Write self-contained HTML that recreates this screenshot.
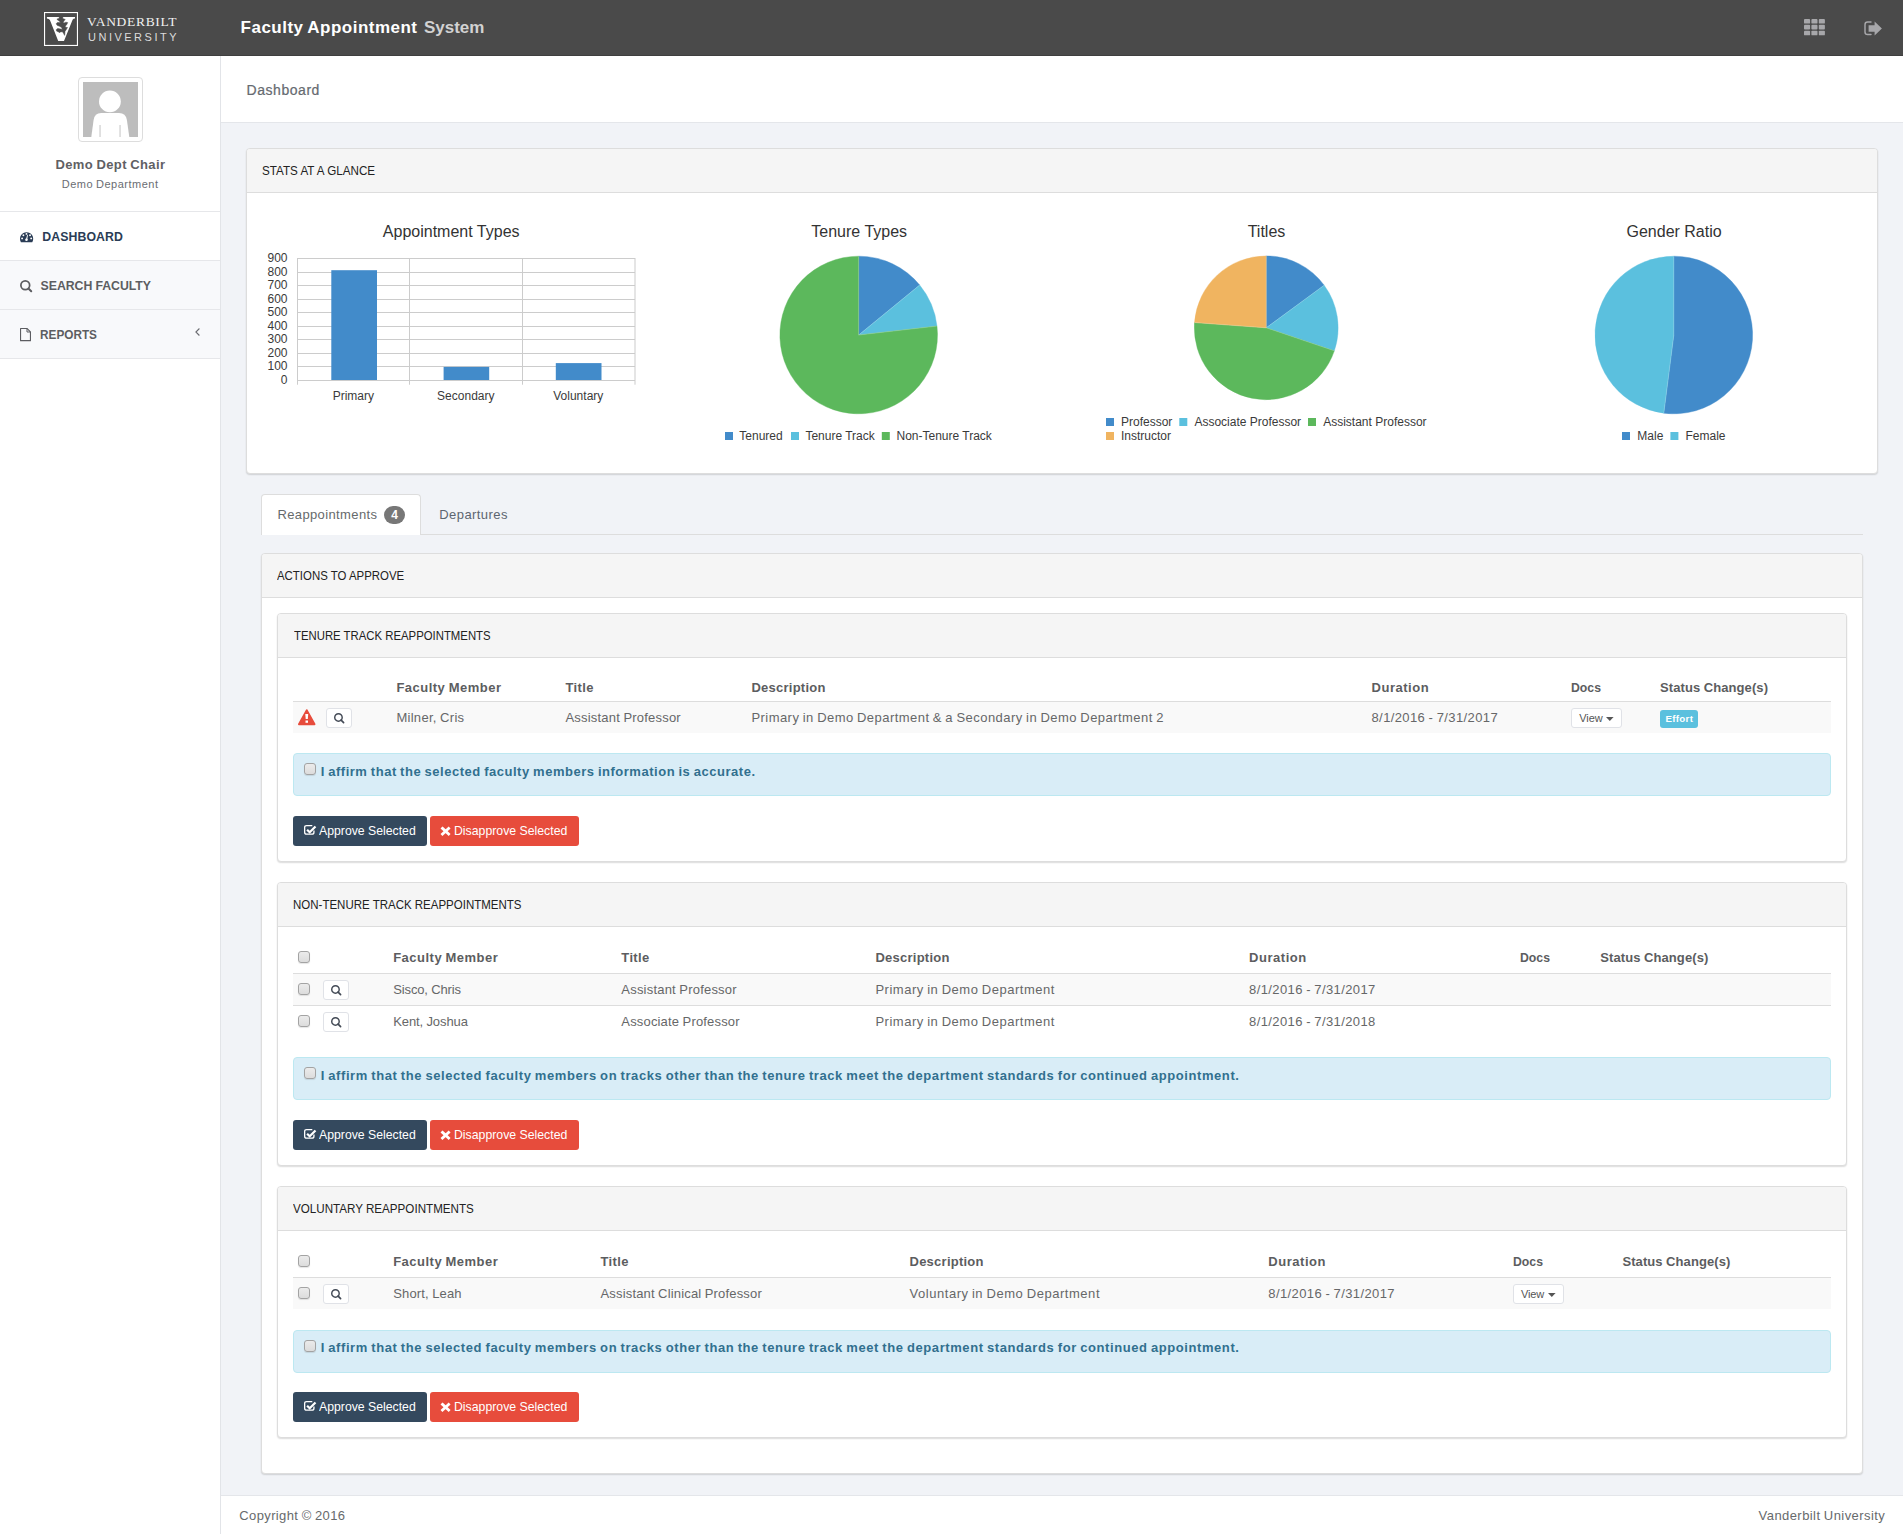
<!DOCTYPE html>
<html lang="en">
<head>
<meta charset="utf-8">
<title>Faculty Appointment System</title>
<style>
html,body{margin:0;padding:0;}
body{width:1903px;height:1534px;position:relative;overflow:hidden;background:#f1f3f7;font-family:"Liberation Sans",sans-serif;font-size:13px;color:#676a6c;}
.a{position:absolute;box-sizing:border-box;}
.t{position:absolute;white-space:nowrap;display:block;font-family:"Liberation Sans",sans-serif;}
.bp{display:inline-block;width:0;height:0;vertical-align:baseline;}
.sf{font-family:"Liberation Serif",serif;}
.panel{position:absolute;box-sizing:border-box;background:#fff;border:1px solid #dddddd;border-radius:4px;box-shadow:0 1px 1.5px rgba(0,0,0,.14);}
.ph{position:absolute;left:0;right:0;top:0;height:43px;background:#f5f5f5;border-bottom:1px solid #dddddd;border-radius:3px 3px 0 0;}
.cb{position:absolute;box-sizing:border-box;width:12px;height:12px;border:1px solid #a3a3a3;border-radius:3px;background:linear-gradient(#ebebeb,#dcdcdc);box-shadow:0 1px 1px rgba(0,0,0,.10);}
.sb{position:absolute;box-sizing:border-box;width:25.6px;height:19.6px;border:1px solid #e0e2e7;border-radius:3px;background:#fff;}
.alert{position:absolute;box-sizing:border-box;left:293px;width:1538px;height:43px;background:#d9edf7;border:1px solid #bce8f1;border-radius:4px;}
.btn{position:absolute;box-sizing:border-box;height:30px;border-radius:3px;}
.hl{position:absolute;height:1px;background:#dddddd;left:293px;width:1538px;}
.rowbg{position:absolute;left:293px;width:1538px;background:#f9f9f9;}
svg{position:absolute;overflow:visible;}
</style>
</head>
<body>
<!-- header -->
<div class="a" style="left:0;top:0;width:1903px;height:56px;background:#4a4a4a;border-bottom:1px solid #3f3f3f;"></div>
<!-- sidebar -->
<div class="a" style="left:0;top:56px;width:221px;height:1478px;background:#fff;border-right:1px solid #e2e4e8;"></div>
<div class="a" style="left:0;top:261px;width:220px;height:98px;background:#f8f9fb;"></div>
<div class="a" style="left:0;top:211px;width:220px;height:1px;background:#e6e7ea;"></div>
<div class="a" style="left:0;top:260px;width:220px;height:1px;background:#e6e7ea;"></div>
<div class="a" style="left:0;top:309px;width:220px;height:1px;background:#e6e7ea;"></div>
<div class="a" style="left:0;top:358px;width:220px;height:1px;background:#e6e7ea;"></div>
<!-- avatar -->
<div class="a" style="left:78px;top:77px;width:65px;height:65px;border:1px solid #dddddd;border-radius:4px;background:#fff;"></div>
<svg style="left:83px;top:82px;" width="55" height="55" viewBox="0 0 55 55"><rect width="55" height="55" fill="#bdbdbd"/><circle cx="26.9" cy="19.4" r="10.9" fill="#fff"/><path d="M8.3,55 L10.6,38 Q11.6,31 18.2,31 L36,31 Q42.8,31 43.9,38 L46.3,55 Z" fill="#fff"/><rect x="16.2" y="43" width="1.7" height="12" fill="#dcdcdc"/><rect x="36.2" y="43" width="1.7" height="12" fill="#dcdcdc"/></svg>
<!-- page heading -->
<div class="a" style="left:221px;top:56px;width:1682px;height:67px;background:#fff;border-bottom:1px solid #e4e6ea;"></div>
<!-- footer -->
<div class="a" style="left:221px;top:1495px;width:1682px;height:39px;background:#fff;border-top:1px solid #e4e6ea;"></div>

<svg style="left:44px;top:12px;" width="34" height="34" viewBox="0 0 34 34">
<rect x="0.55" y="0.55" width="32.9" height="32.9" fill="none" stroke="#ffffff" stroke-width="1.1"/>
<path d="M2.9,5 L31,5 L31,6.5 Q29.3,6.6 28.6,7.7 L20,28.9 L14.2,28.9 L5.9,8.1 Q5,6.7 2.9,6.6 Z" fill="#ffffff"/>
<path d="M15.3,4.8 L15.1,6.4 L13.1,6.9 L13.3,7.8 L15.5,9.3 L16.4,10.4 L13.3,10.6 L12.2,11.7 L13.1,13.3 L15.5,14.2 L17.5,15.5 L18.4,17.5 L16.8,17.1 L13.7,16.4 L12.2,17.7 L12.6,19.1 L14.6,19.9 L15.5,20.8 L16.4,19.9 L18.4,19.7 L19.5,21.3 L20.6,23.4 L20.9,21.3 L21,19.4 L22.2,17.7 L23.5,15.5 L21.7,15.3 L21.3,14.2 L22.8,12.4 L23.7,10.6 L21.9,10.2 L19.9,11.1 L19.3,10.6 L19.9,8.9 L21.3,7.5 L19.9,6.9 L18.8,6.4 L18.8,4.8 Z" fill="#4a4a4a" stroke="#4a4a4a" stroke-width="0.5" stroke-linejoin="round"/>
</svg>
<svg style="left:1804.1px;top:19.1px;" width="21" height="16.3" viewBox="0 0 21 16.3"><rect x="0.00" y="0.00" width="6.1" height="4.6" rx="0.9" fill="#a7a7aa"/><rect x="7.40" y="0.00" width="6.1" height="4.6" rx="0.9" fill="#a7a7aa"/><rect x="14.80" y="0.00" width="6.1" height="4.6" rx="0.9" fill="#a7a7aa"/><rect x="0.00" y="5.85" width="6.1" height="4.6" rx="0.9" fill="#a7a7aa"/><rect x="7.40" y="5.85" width="6.1" height="4.6" rx="0.9" fill="#a7a7aa"/><rect x="14.80" y="5.85" width="6.1" height="4.6" rx="0.9" fill="#a7a7aa"/><rect x="0.00" y="11.70" width="6.1" height="4.6" rx="0.9" fill="#a7a7aa"/><rect x="7.40" y="11.70" width="6.1" height="4.6" rx="0.9" fill="#a7a7aa"/><rect x="14.80" y="11.70" width="6.1" height="4.6" rx="0.9" fill="#a7a7aa"/></svg>
<svg style="left:1864.1px;top:20.6px;" width="18" height="14.8" viewBox="0 0 18 14.8">
<path d="M7,1.1 L3.6,1.1 Q1,1.1 1,3.7 L1,11 Q1,13.6 3.6,13.6 L7,13.6" fill="none" stroke="#a7a7aa" stroke-width="1.45" stroke-linecap="round"/>
<path d="M4.6,4.3 L10.6,4.3 L10.6,0.5 L17.9,7.45 L10.6,14.4 L10.6,10.8 L4.6,10.8 Z" fill="#a7a7aa"/></svg>
<svg style="left:19.9px;top:231.8px;" width="13.2" height="10.2" viewBox="0 0 13.2 10.2">
<path d="M1.3,10.2 Q0.9,10.2 0.7,9.7 A6.6,6.6 0 1 1 12.5,9.7 Q12.3,10.2 11.9,10.2 Z" fill="#2a3c55"/>
<circle cx="2.1" cy="6.4" r="0.95" fill="#fff"/><circle cx="3.4" cy="3.3" r="0.95" fill="#fff"/><circle cx="6.5" cy="1.9" r="0.95" fill="#fff"/><circle cx="10.05" cy="3.3" r="0.95" fill="#fff"/><circle cx="11.2" cy="6.4" r="0.95" fill="#fff"/>
<path d="M7.1,3.1 L7.95,3.3 L7.2,7.6 L6.1,7.3 Z" fill="#fff"/><circle cx="6.5" cy="7.7" r="1.3" fill="#fff"/></svg>
<svg style="left:20px;top:279.7px;" width="12.2" height="12.2" viewBox="0 0 12.2 12.2"><circle cx="5.27" cy="5.27" r="4.39" fill="none" stroke="#5c5d61" stroke-width="1.75"/><line x1="8.43" y1="8.43" x2="11.24" y2="11.24" stroke="#5c5d61" stroke-width="2.01" stroke-linecap="round"/></svg>
<svg style="left:20.2px;top:327.8px;" width="11" height="13.2" viewBox="0 0 11 13.2">
<path d="M0.55,0.55 L7.2,0.55 L10.45,3.8 L10.45,12.65 L0.55,12.65 Z" fill="none" stroke="#5c5d61" stroke-width="1.1" stroke-linejoin="round"/>
<path d="M7,0.7 L7,4 L10.3,4" fill="none" stroke="#5c5d61" stroke-width="1"/></svg>
<svg style="left:195.3px;top:327.8px;" width="5" height="8" viewBox="0 0 5 8"><path d="M4.4,0.5 L0.9,4 L4.4,7.5" fill="none" stroke="#6a6b70" stroke-width="1.1"/></svg>
<div class="panel" style="left:246px;top:148px;width:1632px;height:326px;"><div class="ph"></div></div>
<div class="a" style="left:261px;top:534px;width:1602px;height:1px;background:#dddddd;"></div>
<div class="a" style="left:261px;top:494px;width:160px;height:41px;background:#fff;border:1px solid #dddddd;border-bottom:none;border-radius:4px 4px 0 0;"></div>
<div class="a" style="left:384px;top:506px;width:21px;height:18px;border-radius:9px;background:#777777;"></div>
<div class="panel" style="left:261px;top:553px;width:1602px;height:921px;"><div class="ph"></div></div>
<div class="panel" style="left:277px;top:613px;width:1570px;height:249px;"><div class="ph"></div></div>
<div class="panel" style="left:277px;top:882px;width:1570px;height:284px;"><div class="ph"></div></div>
<div class="panel" style="left:277px;top:1186px;width:1570px;height:252px;"><div class="ph"></div></div>
<div class="rowbg" style="top:702px;height:30.5px;"></div><div class="hl" style="top:701px;"></div>
<svg style="left:297.7px;top:709px;" width="17.5" height="16.2" viewBox="0 0 17.5 16.2"><path d="M8.75,1.1 L16.6,15.3 L0.9,15.3 Z" fill="#e74c3c" stroke="#e74c3c" stroke-width="1.8" stroke-linejoin="round"/><path d="M7.3,5 L10.2,5 L9.8,10 L7.7,10 Z" fill="#fff"/><rect x="7.5" y="11.5" width="2.5" height="2.3" fill="#fff"/></svg>
<div class="sb" style="left:326px;top:708px;"></div><svg style="left:333.8px;top:712.9px;" width="10.4" height="10.4" viewBox="0 0 10.4 10.4"><circle cx="4.47" cy="4.47" r="3.74" fill="none" stroke="#434a56" stroke-width="1.45"/><line x1="7.16" y1="7.16" x2="9.60" y2="9.60" stroke="#434a56" stroke-width="1.67" stroke-linecap="round"/></svg>
<div class="sb" style="left:1571px;top:708px;width:50.5px;"></div><svg style="left:1606.2px;top:717px;" width="7.6" height="4" viewBox="0 0 7.6 4"><path d="M0,0 L7.6,0 L3.8,4 Z" fill="#555"/></svg>
<div class="a" style="left:1660px;top:710px;width:38px;height:17.7px;border-radius:3px;background:#5bc0de;"></div>
<div class="rowbg" style="top:974px;height:31px;"></div><div class="hl" style="top:973px;"></div><div class="hl" style="top:1005px;"></div>
<div class="cb" style="left:298px;top:951px;"></div>
<div class="cb" style="left:298px;top:983px;"></div><div class="sb" style="left:323px;top:980px;"></div><svg style="left:330.8px;top:984.9px;" width="10.4" height="10.4" viewBox="0 0 10.4 10.4"><circle cx="4.47" cy="4.47" r="3.74" fill="none" stroke="#434a56" stroke-width="1.45"/><line x1="7.16" y1="7.16" x2="9.60" y2="9.60" stroke="#434a56" stroke-width="1.67" stroke-linecap="round"/></svg>
<div class="cb" style="left:298px;top:1015px;"></div><div class="sb" style="left:323px;top:1012px;"></div><svg style="left:330.8px;top:1016.9px;" width="10.4" height="10.4" viewBox="0 0 10.4 10.4"><circle cx="4.47" cy="4.47" r="3.74" fill="none" stroke="#434a56" stroke-width="1.45"/><line x1="7.16" y1="7.16" x2="9.60" y2="9.60" stroke="#434a56" stroke-width="1.67" stroke-linecap="round"/></svg>
<div class="rowbg" style="top:1278px;height:30.5px;"></div><div class="hl" style="top:1277px;"></div>
<div class="cb" style="left:298px;top:1255px;"></div>
<div class="cb" style="left:298px;top:1287px;"></div><div class="sb" style="left:323px;top:1284px;"></div><svg style="left:330.8px;top:1288.9px;" width="10.4" height="10.4" viewBox="0 0 10.4 10.4"><circle cx="4.47" cy="4.47" r="3.74" fill="none" stroke="#434a56" stroke-width="1.45"/><line x1="7.16" y1="7.16" x2="9.60" y2="9.60" stroke="#434a56" stroke-width="1.67" stroke-linecap="round"/></svg>
<div class="sb" style="left:1513px;top:1284px;width:50.5px;"></div><svg style="left:1548px;top:1293px;" width="7.6" height="4" viewBox="0 0 7.6 4"><path d="M0,0 L7.6,0 L3.8,4 Z" fill="#555"/></svg>
<div class="alert" style="top:753px;"></div><div class="cb" style="left:304px;top:763px;"></div>
<div class="alert" style="top:1057px;"></div><div class="cb" style="left:304px;top:1067px;"></div>
<div class="alert" style="top:1329.5px;"></div><div class="cb" style="left:304px;top:1339.5px;"></div>
<div class="btn" style="left:293px;top:816px;width:134px;background:#34495e;"></div><svg style="left:303.6px;top:824px;" width="13" height="11.5" viewBox="0 0 13 11.5"><path d="M8.3,1.55 L2.65,1.55 Q0.65,1.55 0.65,3.55 L0.65,8.15 Q0.65,10.15 2.65,10.15 L7.95,10.15 Q9.95,10.15 9.95,8.15 L9.95,6.6" fill="none" stroke="#fff" stroke-width="1.3"/><path d="M3.1,5.7 L5.7,8.3 L11.5,2.5" fill="none" stroke="#fff" stroke-width="2.2"/></svg>
<div class="btn" style="left:430px;top:816px;width:149px;background:#e74c3c;"></div><svg style="left:440.9px;top:826.9px;" width="9.1" height="8.4" viewBox="0 0 9.1 8.4"><path d="M1.5,1.4 L7.6,7.0 M7.6,1.4 L1.5,7.0" stroke="#fff" stroke-width="2.8" stroke-linecap="square" /></svg>
<div class="btn" style="left:293px;top:1120px;width:134px;background:#34495e;"></div><svg style="left:303.6px;top:1128px;" width="13" height="11.5" viewBox="0 0 13 11.5"><path d="M8.3,1.55 L2.65,1.55 Q0.65,1.55 0.65,3.55 L0.65,8.15 Q0.65,10.15 2.65,10.15 L7.95,10.15 Q9.95,10.15 9.95,8.15 L9.95,6.6" fill="none" stroke="#fff" stroke-width="1.3"/><path d="M3.1,5.7 L5.7,8.3 L11.5,2.5" fill="none" stroke="#fff" stroke-width="2.2"/></svg>
<div class="btn" style="left:430px;top:1120px;width:149px;background:#e74c3c;"></div><svg style="left:440.9px;top:1130.9px;" width="9.1" height="8.4" viewBox="0 0 9.1 8.4"><path d="M1.5,1.4 L7.6,7.0 M7.6,1.4 L1.5,7.0" stroke="#fff" stroke-width="2.8" stroke-linecap="square" /></svg>
<div class="btn" style="left:293px;top:1392px;width:134px;background:#34495e;"></div><svg style="left:303.6px;top:1400px;" width="13" height="11.5" viewBox="0 0 13 11.5"><path d="M8.3,1.55 L2.65,1.55 Q0.65,1.55 0.65,3.55 L0.65,8.15 Q0.65,10.15 2.65,10.15 L7.95,10.15 Q9.95,10.15 9.95,8.15 L9.95,6.6" fill="none" stroke="#fff" stroke-width="1.3"/><path d="M3.1,5.7 L5.7,8.3 L11.5,2.5" fill="none" stroke="#fff" stroke-width="2.2"/></svg>
<div class="btn" style="left:430px;top:1392px;width:149px;background:#e74c3c;"></div><svg style="left:440.9px;top:1402.9px;" width="9.1" height="8.4" viewBox="0 0 9.1 8.4"><path d="M1.5,1.4 L7.6,7.0 M7.6,1.4 L1.5,7.0" stroke="#fff" stroke-width="2.8" stroke-linecap="square" /></svg>
<svg style="left:0;top:0;" width="1903" height="500" viewBox="0 0 1903 500" font-family="&quot;Liberation Sans&quot;, sans-serif">
<rect x="297" y="258.0" width="338" height="1" fill="#cccccc"/>
<rect x="297" y="272.0" width="338" height="1" fill="#cccccc"/>
<rect x="297" y="285.0" width="338" height="1" fill="#cccccc"/>
<rect x="297" y="299.0" width="338" height="1" fill="#cccccc"/>
<rect x="297" y="312.0" width="338" height="1" fill="#cccccc"/>
<rect x="297" y="326.0" width="338" height="1" fill="#cccccc"/>
<rect x="297" y="339.0" width="338" height="1" fill="#cccccc"/>
<rect x="297" y="353.0" width="338" height="1" fill="#cccccc"/>
<rect x="297" y="366.0" width="338" height="1" fill="#cccccc"/>
<rect x="297" y="380.0" width="338" height="1" fill="#cccccc"/>
<rect x="297.0" y="258" width="1" height="126.7" fill="#cccccc"/>
<rect x="409.0" y="258" width="1" height="126.7" fill="#cccccc"/>
<rect x="522.0" y="258" width="1" height="126.7" fill="#cccccc"/>
<rect x="634.5" y="258" width="1" height="126.7" fill="#cccccc"/>
<rect x="331.3" y="270.2" width="45.7" height="109.8" fill="#428bca"/>
<rect x="443.6" y="366.9" width="45.6" height="13.1" fill="#428bca"/>
<rect x="555.8" y="363.1" width="45.7" height="16.9" fill="#428bca"/>
<text x="287.5" y="262.3" font-size="12" text-anchor="end" fill="#3a3a3a">900</text>
<text x="287.5" y="276.3" font-size="12" text-anchor="end" fill="#3a3a3a">800</text>
<text x="287.5" y="289.3" font-size="12" text-anchor="end" fill="#3a3a3a">700</text>
<text x="287.5" y="303.3" font-size="12" text-anchor="end" fill="#3a3a3a">600</text>
<text x="287.5" y="316.3" font-size="12" text-anchor="end" fill="#3a3a3a">500</text>
<text x="287.5" y="330.3" font-size="12" text-anchor="end" fill="#3a3a3a">400</text>
<text x="287.5" y="343.3" font-size="12" text-anchor="end" fill="#3a3a3a">300</text>
<text x="287.5" y="357.3" font-size="12" text-anchor="end" fill="#3a3a3a">200</text>
<text x="287.5" y="370.3" font-size="12" text-anchor="end" fill="#3a3a3a">100</text>
<text x="287.5" y="384.3" font-size="12" text-anchor="end" fill="#3a3a3a">0</text>
<text x="353.3" y="400" font-size="12" text-anchor="middle" fill="#3a3a3a">Primary</text>
<text x="465.8" y="400" font-size="12" text-anchor="middle" fill="#3a3a3a">Secondary</text>
<text x="578.3" y="400" font-size="12" text-anchor="middle" fill="#3a3a3a">Voluntary</text>
<text x="451.2" y="236.6" font-size="16" text-anchor="middle" fill="#333333">Appointment Types</text>
<text x="859.2" y="236.6" font-size="16" text-anchor="middle" fill="#333333">Tenure Types</text>
<text x="1266.5" y="236.6" font-size="16" text-anchor="middle" fill="#333333">Titles</text>
<text x="1674.1" y="236.6" font-size="16" text-anchor="middle" fill="#333333">Gender Ratio</text>
<path d="M858.70,335.00 L858.70,256.20 A78.8,78.8 0 0 1 919.68,285.09 Z" fill="#428bca" stroke="#428bca" stroke-width="0.4" stroke-linejoin="round"/>
<path d="M858.70,335.00 L919.68,285.09 A78.8,78.8 0 0 1 936.99,326.08 Z" fill="#5bc0de" stroke="#5bc0de" stroke-width="0.4" stroke-linejoin="round"/>
<path d="M858.70,335.00 L936.99,326.08 A78.8,78.8 0 1 1 858.70,256.20 Z" fill="#5cb85c" stroke="#5cb85c" stroke-width="0.4" stroke-linejoin="round"/>
<line x1="858.70" y1="335.00" x2="858.70" y2="256.20" stroke="#ffffff" stroke-opacity="0.18" stroke-width="1"/>
<line x1="858.70" y1="335.00" x2="919.68" y2="285.09" stroke="#ffffff" stroke-opacity="0.18" stroke-width="1"/>
<line x1="858.70" y1="335.00" x2="936.99" y2="326.08" stroke="#ffffff" stroke-opacity="0.18" stroke-width="1"/>
<path d="M1266.20,327.80 L1266.20,255.90 A71.9,71.9 0 0 1 1324.15,285.23 Z" fill="#428bca" stroke="#428bca" stroke-width="0.4" stroke-linejoin="round"/>
<path d="M1266.20,327.80 L1324.15,285.23 A71.9,71.9 0 0 1 1334.30,350.85 Z" fill="#5bc0de" stroke="#5bc0de" stroke-width="0.4" stroke-linejoin="round"/>
<path d="M1266.20,327.80 L1334.30,350.85 A71.9,71.9 0 0 1 1194.49,322.53 Z" fill="#5cb85c" stroke="#5cb85c" stroke-width="0.4" stroke-linejoin="round"/>
<path d="M1266.20,327.80 L1194.49,322.53 A71.9,71.9 0 0 1 1266.20,255.90 Z" fill="#f0b460" stroke="#f0b460" stroke-width="0.4" stroke-linejoin="round"/>
<line x1="1266.20" y1="327.80" x2="1266.20" y2="255.90" stroke="#ffffff" stroke-opacity="0.18" stroke-width="1"/>
<line x1="1266.20" y1="327.80" x2="1324.15" y2="285.23" stroke="#ffffff" stroke-opacity="0.18" stroke-width="1"/>
<line x1="1266.20" y1="327.80" x2="1334.30" y2="350.85" stroke="#ffffff" stroke-opacity="0.18" stroke-width="1"/>
<line x1="1266.20" y1="327.80" x2="1194.49" y2="322.53" stroke="#ffffff" stroke-opacity="0.18" stroke-width="1"/>
<path d="M1673.80,335.00 L1673.80,256.20 A78.8,78.8 0 1 1 1663.79,413.16 Z" fill="#428bca" stroke="#428bca" stroke-width="0.4" stroke-linejoin="round"/>
<path d="M1673.80,335.00 L1663.79,413.16 A78.8,78.8 0 0 1 1673.80,256.20 Z" fill="#5bc0de" stroke="#5bc0de" stroke-width="0.4" stroke-linejoin="round"/>
<line x1="1673.80" y1="335.00" x2="1673.80" y2="256.20" stroke="#ffffff" stroke-opacity="0.18" stroke-width="1"/>
<line x1="1673.80" y1="335.00" x2="1663.79" y2="413.16" stroke="#ffffff" stroke-opacity="0.18" stroke-width="1"/>
<rect x="725" y="432" width="8" height="8" fill="#428bca"/>
<text x="739.3" y="439.8" font-size="12" fill="#3a3a3a">Tenured</text>
<rect x="791" y="432" width="8" height="8" fill="#5bc0de"/>
<text x="805.4" y="439.8" font-size="12" fill="#3a3a3a">Tenure Track</text>
<rect x="881.8" y="432" width="8" height="8" fill="#5cb85c"/>
<text x="896.5" y="439.8" font-size="12" fill="#3a3a3a">Non-Tenure Track</text>
<rect x="1106" y="418" width="8" height="8" fill="#428bca"/>
<text x="1121" y="425.8" font-size="12" fill="#3a3a3a">Professor</text>
<rect x="1179.3" y="418" width="8" height="8" fill="#5bc0de"/>
<text x="1194.4" y="425.8" font-size="12" fill="#3a3a3a">Associate Professor</text>
<rect x="1308" y="418" width="8" height="8" fill="#5cb85c"/>
<text x="1323.2" y="425.8" font-size="12" fill="#3a3a3a">Assistant Professor</text>
<rect x="1106" y="432" width="8" height="8" fill="#f0b460"/>
<text x="1121" y="439.8" font-size="12" fill="#3a3a3a">Instructor</text>
<rect x="1622" y="432" width="8" height="8" fill="#428bca"/>
<text x="1637.3" y="439.8" font-size="12" fill="#3a3a3a">Male</text>
<rect x="1670.4" y="432" width="8" height="8" fill="#5bc0de"/>
<text x="1685.5" y="439.8" font-size="12" fill="#3a3a3a">Female</text>
</svg>
<span class="t sf" style="left:87.0px;top:14.02px;font-size:13.5px;line-height:16.20px;color:#f0f0f0;letter-spacing:0.693px;">VANDERBILT</span>
<span class="t" style="left:88.0px;top:31.01px;font-size:11px;line-height:13.20px;color:#dcdcdc;letter-spacing:2.498px;">UNIVERSITY</span>
<span class="t" style="left:240.6px;top:18.00px;font-size:17px;line-height:20.40px;font-weight:bold;color:#ffffff;letter-spacing:0.486px;word-spacing:-0.792px;">Faculty Appointment</span>
<span class="t" style="left:424.0px;top:18.00px;font-size:17px;line-height:20.40px;font-weight:bold;color:#d2d2d2;letter-spacing:-0.037px;">System</span>
<span class="t" style="left:55.5px;top:156.60px;font-size:13px;line-height:15.60px;font-weight:bold;color:#5f6064;letter-spacing:0.375px;word-spacing:-0.609px;">Demo Dept Chair</span>
<span class="t" style="left:61.8px;top:177.81px;font-size:11px;line-height:13.20px;color:#6a6d72;letter-spacing:0.502px;word-spacing:-0.700px;">Demo Department</span>
<span class="t" style="left:42.2px;top:230.00px;font-size:12.3px;line-height:14.76px;font-weight:bold;color:#2a3c55;letter-spacing:0.108px;">DASHBOARD</span>
<span class="t" style="left:40.6px;top:279.00px;font-size:12.3px;line-height:14.76px;font-weight:bold;color:#5c5d61;letter-spacing:-0.043px;word-spacing:-0.178px;">SEARCH FACULTY</span>
<span class="t" style="left:40.1px;top:327.80px;font-size:12.3px;line-height:14.76px;font-weight:bold;color:#5c5d61;transform:scaleX(0.9587);transform-origin:0 50%;">REPORTS</span>
<span class="t" style="left:246.6px;top:82.00px;font-size:14px;line-height:16.80px;-webkit-text-stroke:0.22px #666a70;color:#666a70;letter-spacing:0.537px;">Dashboard</span>
<span class="t" style="left:262.3px;top:163.20px;font-size:13px;line-height:15.60px;color:#222222;transform:scaleX(0.8962);transform-origin:0 50%;">STATS AT A GLANCE</span>
<span class="t" style="left:277.4px;top:507.20px;font-size:13px;line-height:15.60px;color:#666a6c;letter-spacing:0.379px;">Reappointments</span>
<span class="t" style="left:439.3px;top:507.20px;font-size:13px;line-height:15.60px;color:#5c6570;letter-spacing:0.421px;">Departures</span>
<span class="t" style="left:277.4px;top:568.30px;font-size:13px;line-height:15.60px;color:#222222;transform:scaleX(0.8789);transform-origin:0 50%;">ACTIONS TO APPROVE</span>
<span class="t" style="left:293.5px;top:628.40px;font-size:13px;line-height:15.60px;color:#222222;transform:scaleX(0.8733);transform-origin:0 50%;">TENURE TRACK REAPPOINTMENTS</span>
<span class="t" style="left:293.4px;top:897.20px;font-size:13px;line-height:15.60px;color:#222222;transform:scaleX(0.8845);transform-origin:0 50%;">NON-TENURE TRACK REAPPOINTMENTS</span>
<span class="t" style="left:293.4px;top:1201.20px;font-size:13px;line-height:15.60px;color:#222222;transform:scaleX(0.8939);transform-origin:0 50%;">VOLUNTARY REAPPOINTMENTS</span>
<span class="t" style="left:396.4px;top:680.01px;font-size:13px;line-height:15.60px;font-weight:bold;color:#5c5d60;letter-spacing:0.487px;word-spacing:-0.721px;">Faculty Member</span>
<span class="t" style="left:565.4px;top:680.01px;font-size:13px;line-height:15.60px;font-weight:bold;color:#5c5d60;letter-spacing:0.375px;">Title</span>
<span class="t" style="left:751.4px;top:680.01px;font-size:13px;line-height:15.60px;font-weight:bold;color:#5c5d60;letter-spacing:0.248px;">Description</span>
<span class="t" style="left:1371.5px;top:680.01px;font-size:13px;line-height:15.60px;font-weight:bold;color:#5c5d60;letter-spacing:0.535px;">Duration</span>
<span class="t" style="left:1571.2px;top:680.01px;font-size:13px;line-height:15.60px;font-weight:bold;color:#5c5d60;transform:scaleX(0.9435);transform-origin:0 50%;">Docs</span>
<span class="t" style="left:1660.0px;top:680.01px;font-size:13px;line-height:15.60px;font-weight:bold;color:#5c5d60;letter-spacing:0.095px;word-spacing:-0.329px;">Status Change(s)</span>
<span class="t" style="left:396.4px;top:710.40px;font-size:13px;line-height:15.60px;color:#666768;letter-spacing:0.292px;word-spacing:-0.526px;">Milner, Cris</span>
<span class="t" style="left:565.4px;top:710.40px;font-size:13px;line-height:15.60px;color:#666768;letter-spacing:0.208px;word-spacing:-0.442px;">Assistant Professor</span>
<span class="t" style="left:751.4px;top:710.40px;font-size:13px;line-height:15.60px;color:#666768;letter-spacing:0.455px;word-spacing:-0.689px;">Primary in Demo Department &amp; a Secondary in Demo Department 2</span>
<span class="t" style="left:1371.5px;top:710.40px;font-size:13px;line-height:15.60px;color:#666768;letter-spacing:0.392px;word-spacing:-0.626px;">8/1/2016 - 7/31/2017</span>
<span class="t" style="left:393.2px;top:950.01px;font-size:13px;line-height:15.60px;font-weight:bold;color:#5c5d60;letter-spacing:0.487px;word-spacing:-0.721px;">Faculty Member</span>
<span class="t" style="left:621.3px;top:950.01px;font-size:13px;line-height:15.60px;font-weight:bold;color:#5c5d60;letter-spacing:0.375px;">Title</span>
<span class="t" style="left:875.4px;top:950.01px;font-size:13px;line-height:15.60px;font-weight:bold;color:#5c5d60;letter-spacing:0.248px;">Description</span>
<span class="t" style="left:1249.1px;top:950.01px;font-size:13px;line-height:15.60px;font-weight:bold;color:#5c5d60;letter-spacing:0.535px;">Duration</span>
<span class="t" style="left:1519.7px;top:950.01px;font-size:13px;line-height:15.60px;font-weight:bold;color:#5c5d60;transform:scaleX(0.9435);transform-origin:0 50%;">Docs</span>
<span class="t" style="left:1600.3px;top:950.01px;font-size:13px;line-height:15.60px;font-weight:bold;color:#5c5d60;letter-spacing:0.095px;word-spacing:-0.329px;">Status Change(s)</span>
<span class="t" style="left:393.2px;top:982.01px;font-size:13px;line-height:15.60px;color:#666768;letter-spacing:-0.123px;word-spacing:-0.111px;">Sisco, Chris</span>
<span class="t" style="left:621.3px;top:982.01px;font-size:13px;line-height:15.60px;color:#666768;letter-spacing:0.208px;word-spacing:-0.442px;">Assistant Professor</span>
<span class="t" style="left:875.4px;top:982.01px;font-size:13px;line-height:15.60px;color:#666768;letter-spacing:0.517px;word-spacing:-0.751px;">Primary in Demo Department</span>
<span class="t" style="left:1249.1px;top:982.01px;font-size:13px;line-height:15.60px;color:#666768;letter-spacing:0.392px;word-spacing:-0.626px;">8/1/2016 - 7/31/2017</span>
<span class="t" style="left:393.2px;top:1014.01px;font-size:13px;line-height:15.60px;color:#666768;letter-spacing:-0.096px;word-spacing:-0.138px;">Kent, Joshua</span>
<span class="t" style="left:621.3px;top:1014.01px;font-size:13px;line-height:15.60px;color:#666768;letter-spacing:0.172px;word-spacing:-0.406px;">Associate Professor</span>
<span class="t" style="left:875.4px;top:1014.01px;font-size:13px;line-height:15.60px;color:#666768;letter-spacing:0.517px;word-spacing:-0.751px;">Primary in Demo Department</span>
<span class="t" style="left:1249.1px;top:1014.01px;font-size:13px;line-height:15.60px;color:#666768;letter-spacing:0.392px;word-spacing:-0.626px;">8/1/2016 - 7/31/2018</span>
<span class="t" style="left:393.2px;top:1254.01px;font-size:13px;line-height:15.60px;font-weight:bold;color:#5c5d60;letter-spacing:0.487px;word-spacing:-0.721px;">Faculty Member</span>
<span class="t" style="left:600.5px;top:1254.01px;font-size:13px;line-height:15.60px;font-weight:bold;color:#5c5d60;letter-spacing:0.375px;">Title</span>
<span class="t" style="left:909.5px;top:1254.01px;font-size:13px;line-height:15.60px;font-weight:bold;color:#5c5d60;letter-spacing:0.248px;">Description</span>
<span class="t" style="left:1268.3px;top:1254.01px;font-size:13px;line-height:15.60px;font-weight:bold;color:#5c5d60;letter-spacing:0.535px;">Duration</span>
<span class="t" style="left:1513.1px;top:1254.01px;font-size:13px;line-height:15.60px;font-weight:bold;color:#5c5d60;transform:scaleX(0.9435);transform-origin:0 50%;">Docs</span>
<span class="t" style="left:1622.4px;top:1254.01px;font-size:13px;line-height:15.60px;font-weight:bold;color:#5c5d60;letter-spacing:0.095px;word-spacing:-0.329px;">Status Change(s)</span>
<span class="t" style="left:393.2px;top:1286.01px;font-size:13px;line-height:15.60px;color:#666768;letter-spacing:0.157px;word-spacing:-0.391px;">Short, Leah</span>
<span class="t" style="left:600.5px;top:1286.01px;font-size:13px;line-height:15.60px;color:#666768;letter-spacing:0.167px;word-spacing:-0.401px;">Assistant Clinical Professor</span>
<span class="t" style="left:909.5px;top:1286.01px;font-size:13px;line-height:15.60px;color:#666768;letter-spacing:0.539px;word-spacing:-0.773px;">Voluntary in Demo Department</span>
<span class="t" style="left:1268.3px;top:1286.01px;font-size:13px;line-height:15.60px;color:#666768;letter-spacing:0.392px;word-spacing:-0.626px;">8/1/2016 - 7/31/2017</span>
<span class="t" style="left:320.7px;top:764.01px;font-size:13px;line-height:15.60px;font-weight:bold;color:#31708f;letter-spacing:0.521px;word-spacing:-0.755px;">I affirm that the selected faculty members information is accurate.</span>
<span class="t" style="left:320.7px;top:1068.01px;font-size:13px;line-height:15.60px;font-weight:bold;color:#31708f;letter-spacing:0.583px;word-spacing:-0.817px;">I affirm that the selected faculty members on tracks other than the tenure track meet the department standards for continued appointment.</span>
<span class="t" style="left:320.7px;top:1340.20px;font-size:13px;line-height:15.60px;font-weight:bold;color:#31708f;letter-spacing:0.583px;word-spacing:-0.817px;">I affirm that the selected faculty members on tracks other than the tenure track meet the department standards for continued appointment.</span>
<span class="t" style="left:318.6px;top:823.01px;font-size:13px;line-height:15.60px;color:#ffffff;transform:scaleX(0.9423);transform-origin:0 50%;">Approve Selected</span>
<span class="t" style="left:454.2px;top:823.01px;font-size:13px;line-height:15.60px;color:#ffffff;transform:scaleX(0.9444);transform-origin:0 50%;">Disapprove Selected</span>
<span class="t" style="left:318.6px;top:1127.01px;font-size:13px;line-height:15.60px;color:#ffffff;transform:scaleX(0.9423);transform-origin:0 50%;">Approve Selected</span>
<span class="t" style="left:454.2px;top:1127.01px;font-size:13px;line-height:15.60px;color:#ffffff;transform:scaleX(0.9444);transform-origin:0 50%;">Disapprove Selected</span>
<span class="t" style="left:318.6px;top:1399.01px;font-size:13px;line-height:15.60px;color:#ffffff;transform:scaleX(0.9423);transform-origin:0 50%;">Approve Selected</span>
<span class="t" style="left:454.2px;top:1399.01px;font-size:13px;line-height:15.60px;color:#ffffff;transform:scaleX(0.9444);transform-origin:0 50%;">Disapprove Selected</span>
<span class="t" style="left:1579.3px;top:712.01px;font-size:11px;line-height:13.20px;color:#555;letter-spacing:-0.119px;">View</span>
<span class="t" style="left:1521.0px;top:1288.01px;font-size:11px;line-height:13.20px;color:#555;letter-spacing:-0.119px;">View</span>
<span class="t" style="left:1665.4px;top:713.01px;font-size:9.75px;line-height:11.70px;font-weight:bold;color:#ffffff;letter-spacing:0.320px;">Effort</span>
<span class="t" style="left:344.6px;width:100px;text-align:center;top:508.30px;font-size:12px;line-height:14.40px;font-weight:bold;color:#ffffff;">4</span>
<span class="t" style="left:239.3px;top:1508.01px;font-size:13px;line-height:15.60px;color:#676a6c;letter-spacing:0.370px;word-spacing:-0.604px;">Copyright © 2016</span>
<span class="t" style="left:1758.6px;top:1508.01px;font-size:13px;line-height:15.60px;color:#676a6c;letter-spacing:0.430px;word-spacing:-0.664px;">Vanderbilt University</span>
</body>
</html>
